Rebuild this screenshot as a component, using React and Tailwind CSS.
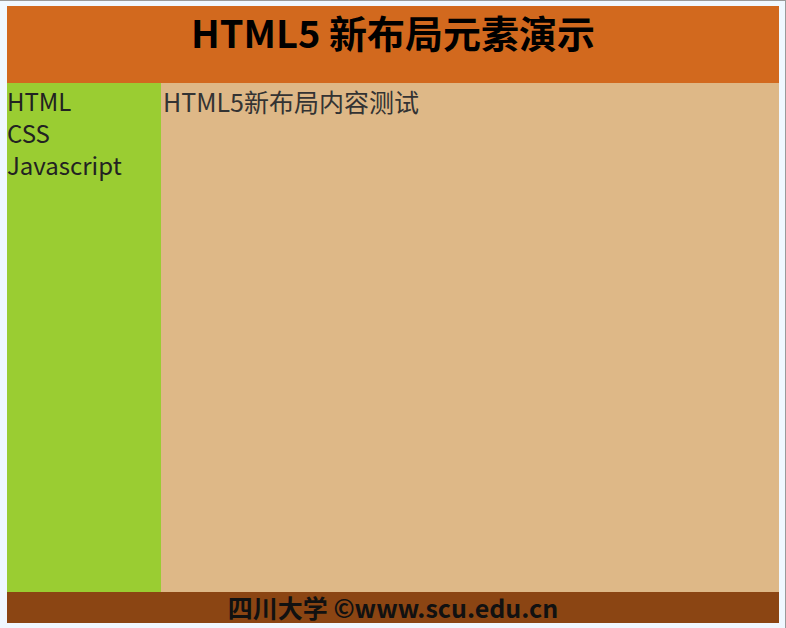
import React from 'react';

const font = { fontFamily: '"Noto Sans CJK SC", "Noto Sans", sans-serif' };

export default function App() {
  return (
    <div className="w-[786px] h-[628px] bg-[#f0f8ff] pt-[5px] pl-[7px] border-t border-r border-[#9a9a9a]" style={font}>
      <div className="w-[772px] flex flex-col">
        <header className="h-[77px] bg-[#d2691e] flex justify-center pt-[1px]">
          <h1 className="text-[38px] font-bold leading-[50px] text-black">HTML5 新布局元素演示</h1>
        </header>
        <div className="flex h-[509px]">
          <nav className="w-[154px] bg-[#9acd32] text-[24px] leading-[32px] text-[#222] pt-[2px]">
            <div>HTML</div>
            <div>CSS</div>
            <div>Javascript</div>
          </nav>
          <main className="flex-1 bg-[#deb887] text-[25px] leading-[32px] text-[#333] pl-[2px] pt-[2px]">
            HTML5新布局内容测试
          </main>
        </div>
        <footer className="h-[31px] bg-[#8b4513] flex items-center justify-center text-[25px] font-bold text-[#111]">
          四川大学 ©www.scu.edu.cn
        </footer>
      </div>
    </div>
  );
}
